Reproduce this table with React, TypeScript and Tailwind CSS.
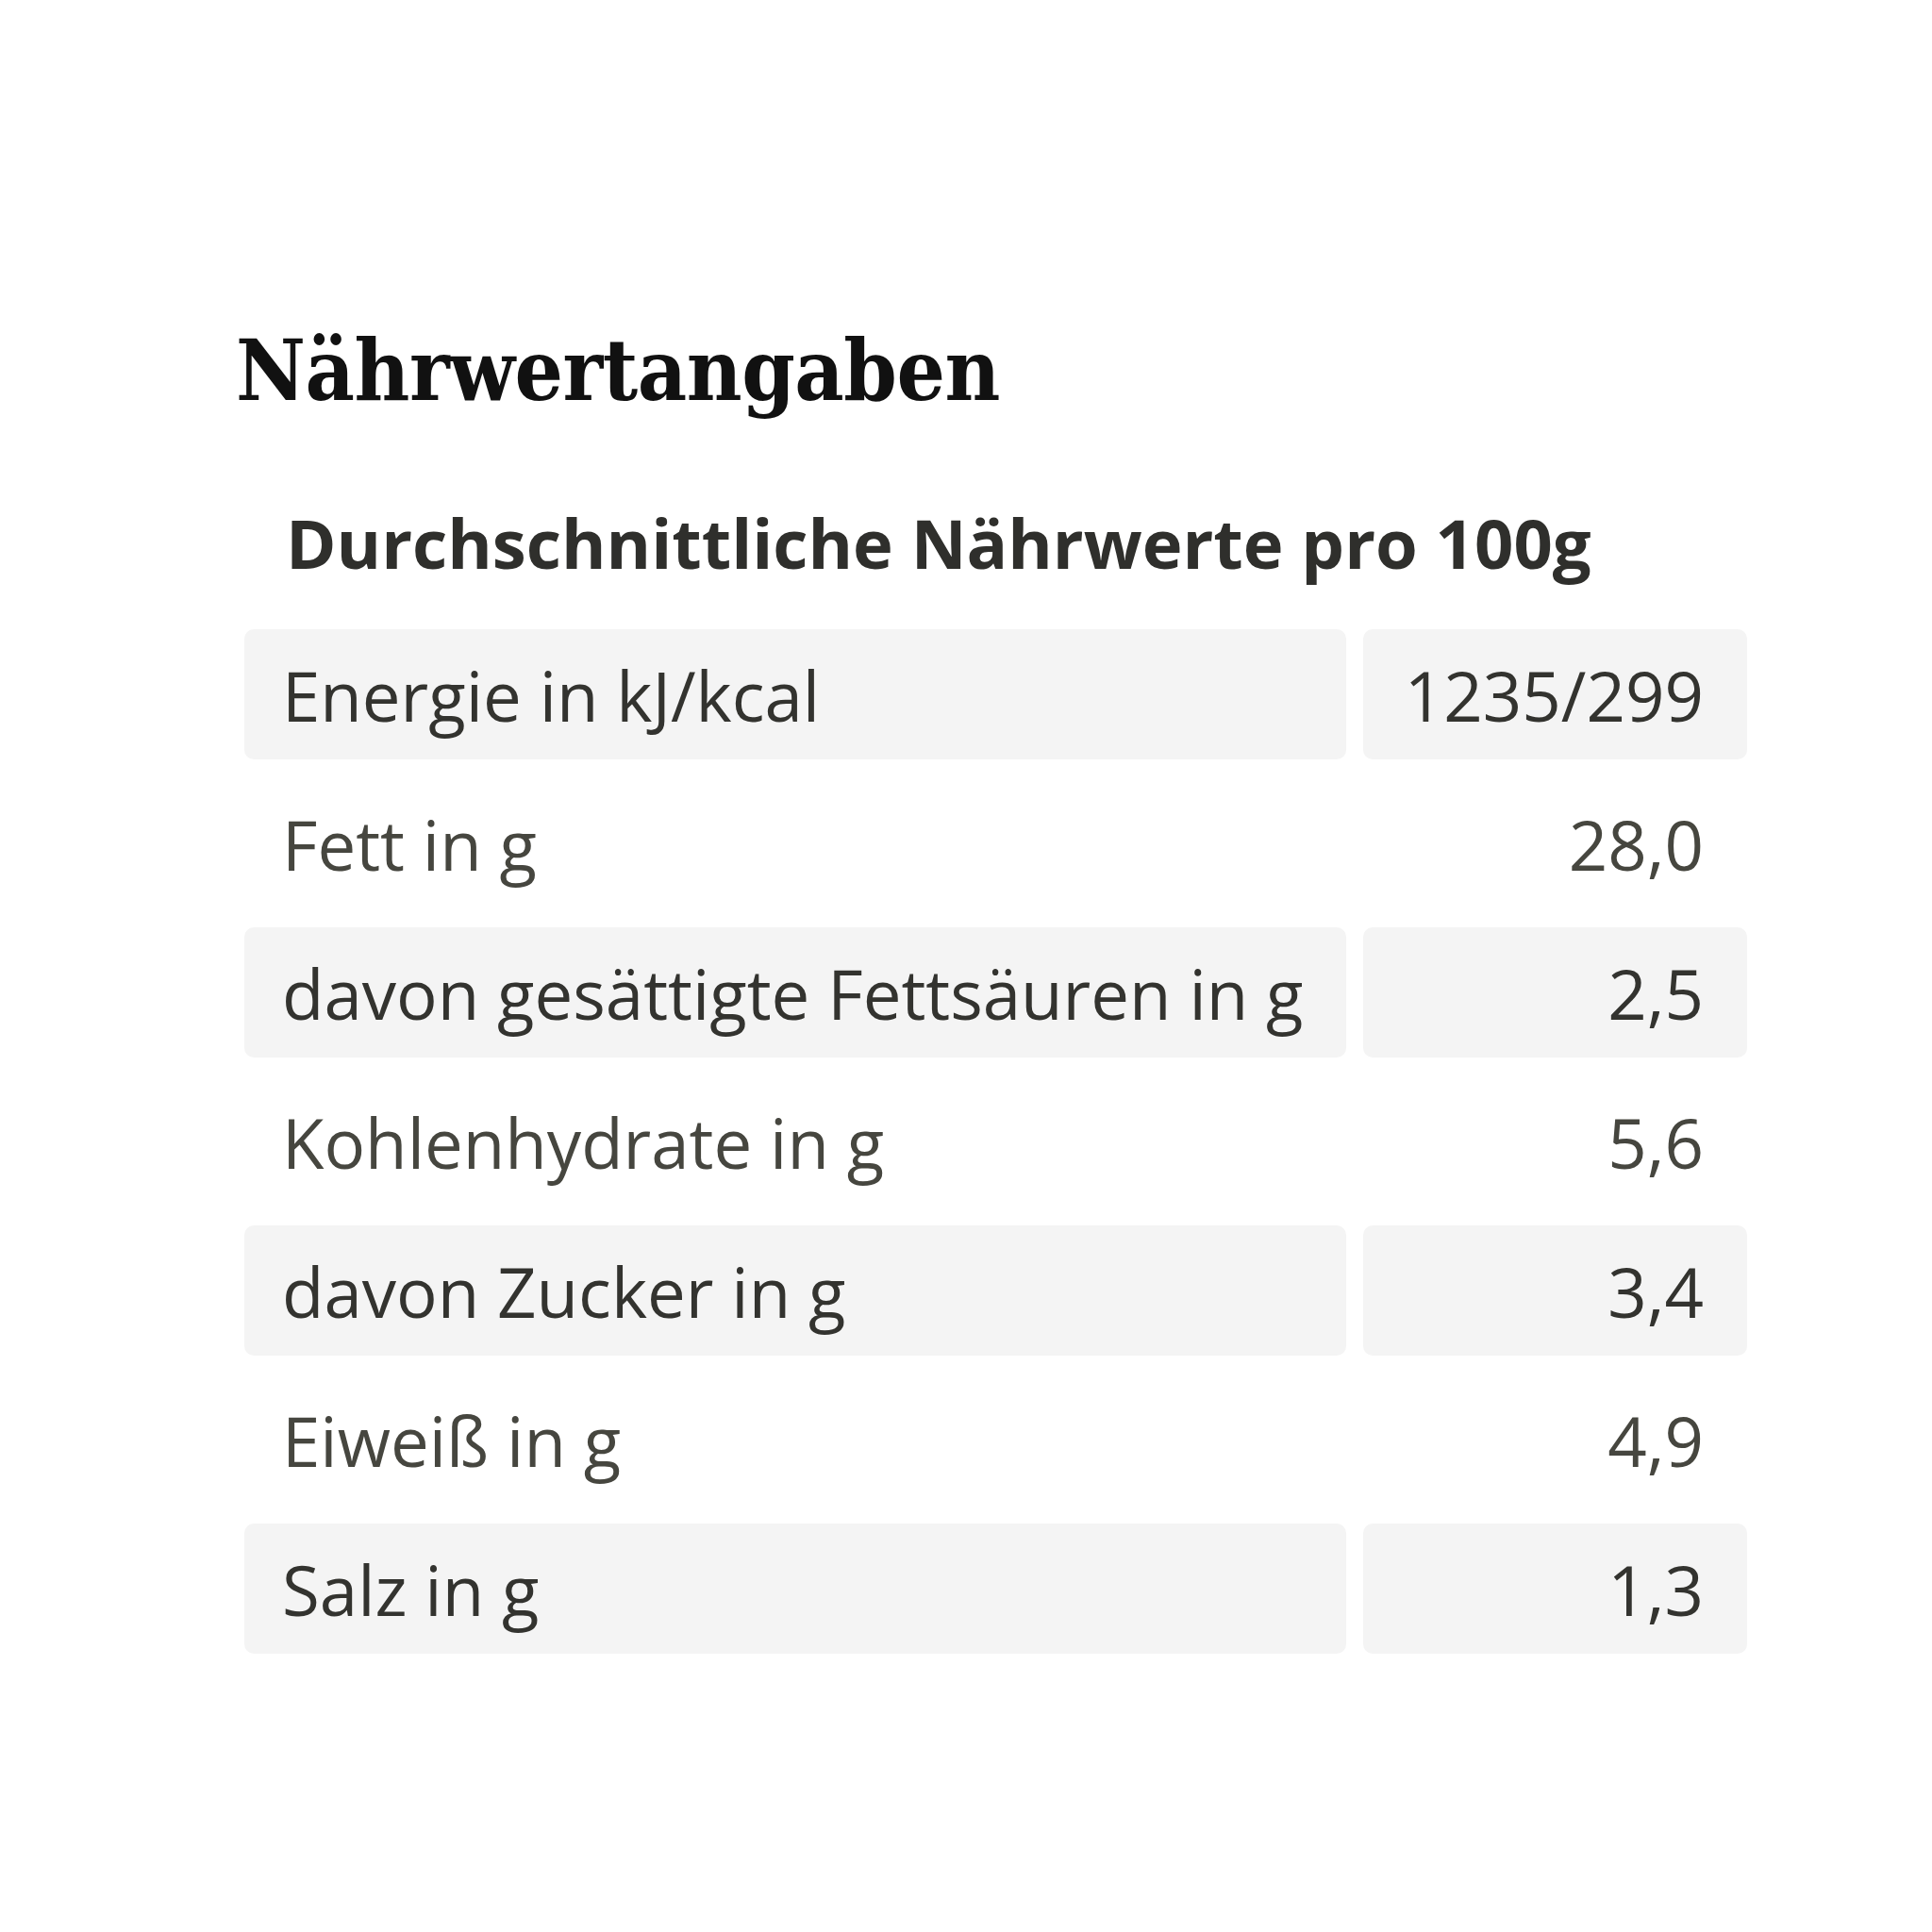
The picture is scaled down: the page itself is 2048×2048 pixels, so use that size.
import React from "react";

const rows: { label: string; value: string; shaded: boolean }[] = [
  { label: "Energie in kJ/kcal", value: "1235/299", shaded: true },
  { label: "Fett in g", value: "28,0", shaded: false },
  { label: "davon gesättigte Fettsäuren in g", value: "2,5", shaded: true },
  { label: "Kohlenhydrate in g", value: "5,6", shaded: false },
  { label: "davon Zucker in g", value: "3,4", shaded: true },
  { label: "Eiweiß in g", value: "4,9", shaded: false },
  { label: "Salz in g", value: "1,3", shaded: true },
];

export default function App() {
  return (
    <div className="w-[2048px] h-[2048px] bg-white pl-[250px] pt-[347px]">
      <h2 className="font-['DejaVu_Serif',serif] font-bold font-stretch-condensed text-[90px] leading-[90px] text-[#111111] tracking-[-0.45px]">
        Nährwertangaben
      </h2>
      <div className="pl-[9px] w-[1602px] mt-[102px] font-['Open_Sans',sans-serif]">
        <div className="pl-[44px] text-[72.4px] leading-[72px] font-bold text-[#2f2f2c]">
          Durchschnittliche Nährwerte pro 100g
        </div>
        <div className="mt-[56px] flex flex-col gap-[20px]">
          {rows.map((r) => (
            <div key={r.label} className="flex gap-[18px] h-[138px]">
              <div
                className={
                  "flex-1 flex items-center pl-[40px] rounded-[10px] text-[72.6px] leading-[73px] font-normal " +
                  (r.shaded ? "bg-[#f4f4f4] text-[#33332f]" : "text-[#46463f]")
                }
              >
                {r.label}
              </div>
              <div
                className={
                  "w-[407px] flex items-center justify-end pr-[46px] rounded-[10px] text-[72.6px] leading-[73px] font-normal " +
                  (r.shaded ? "bg-[#f4f4f4] text-[#33332f]" : "text-[#46463f]")
                }
              >
                {r.value}
              </div>
            </div>
          ))}
        </div>
      </div>
    </div>
  );
}
